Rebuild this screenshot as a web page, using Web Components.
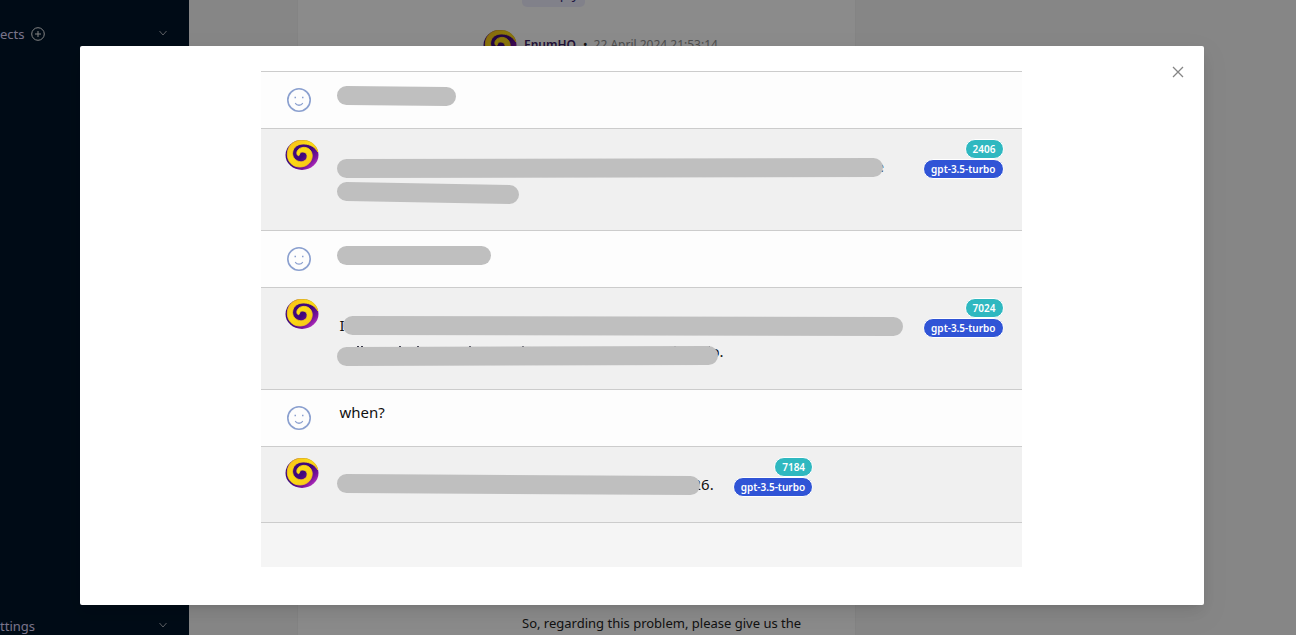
<!DOCTYPE html>
<html lang="en">
<head>
<meta charset="utf-8">
<title>Conversation</title>
<style>
  html, body { margin: 0; height: 100%; overflow: hidden; }
  body { font: 14px/22px "Noto Sans", sans-serif; color: #222; background: #f5f5f5; }
</style>
</head>
<body>
<app-shell>
  <nav-row slot="top" addable>ects</nav-row>
  <nav-row slot="bottom">ttings</nav-row>
  <ticket-feed></ticket-feed>
</app-shell>
<modal-dialog>
  <chat-log>
    <chat-message from="user"><text-line><redact-bar length="119" start="14" end="15"></redact-bar></text-line></chat-message>
    <chat-message from="bot" wide tokens="2406" model="gpt-3.5-turbo">
      <text-line><redact-bar length="546" start="15" end="14"></redact-bar><span slot="tail">e</span></text-line>
      <text-line><redact-bar length="182" start="12" end="15"></redact-bar></text-line>
    </chat-message>
    <chat-message from="user"><text-line><redact-bar length="154" start="15" end="15"></redact-bar></text-line></chat-message>
    <chat-message from="bot" wide tokens="7024" model="gpt-3.5-turbo">
      <text-line inset><span slot="head">I</span><redact-bar length="560" start="13" end="14"></redact-bar></text-line>
      <text-line><redact-bar length="381" start="18" end="17" marks="20 24 62 80 132 185 337 371"></redact-bar><span slot="tail">o.</span></text-line>
    </chat-message>
    <chat-message from="user"><text-line inset>when?</text-line></chat-message>
    <chat-message from="bot" tokens="7184" model="gpt-3.5-turbo">
      <text-line><redact-bar length="363" start="12" end="14"></redact-bar><span slot="tail">26.</span></text-line>
    </chat-message>
  </chat-log>
</modal-dialog>

<script>
const define = (name, html, setup) => {
  const template = document.createElement('template');
  template.innerHTML = html;
  customElements.define(name, class extends HTMLElement {
    constructor() {
      super();
      this.attachShadow({ mode: 'open' }).append(template.content.cloneNode(true));
    }
    connectedCallback() { if (setup) setup(this, this.shadowRoot); }
  });
};

define('swirl-logo', `
  <style>:host { display: block; width: 34px; height: 30px; } svg { display: block; }</style>
  <svg width="34" height="30" viewBox="0 0 34 30" aria-hidden="true">
    <defs>
      <linearGradient id="p" x1=".4" y1=".3" x2="1" y2=".9"><stop offset=".3" stop-color="#40087c"/><stop offset=".65" stop-color="#7a149c"/><stop offset="1" stop-color="#d83fd0"/></linearGradient>
      <linearGradient id="y" x1="0" y1="0" x2="1" y2="1"><stop offset="0" stop-color="#f9b51c"/><stop offset=".4" stop-color="#fbdc12"/><stop offset="1" stop-color="#f8c21a"/></linearGradient>
    </defs>
    <ellipse cx="17" cy="15" rx="16.500" ry="15" fill="url(#p)"/>
    <path d="M32.800 12C31.500 4 24 -.2 16 .2C8 .6 2.500 6 2.300 14C2.200 22 8 27.300 15.500 27C23 26.600 27.600 21 27.200 15C26.800 9.800 22.500 7 18 7.400C13.800 7.800 11.200 11 12 14.200C12.400 15.600 13.500 16 14.200 15.300C14.600 13 16 11.800 18 12C21 12.200 22.500 14.500 22 17.200C21.300 20.800 17.500 22.600 13.800 21.400C9.300 20 7 16 7.700 12C8.600 6.500 13.500 3.800 19 4C25.500 4.200 30.500 7.500 32.800 12Z" fill="url(#y)" stroke="url(#y)" stroke-width=".8"/>
  </svg>`);

define('smile-icon', `
  <style>:host { display: block; width: 24px; height: 24px; } svg { display: block; }</style>
  <svg width="24" height="24" viewBox="0 0 24 24" fill="none" stroke="#8ba0cf" aria-hidden="true">
    <circle cx="12" cy="12" r="11.200" stroke-width="1.600"/>
    <path d="M8.500 15.500C10 17.800 14 17.800 15.500 15.500" stroke-width="1.300" stroke-linecap="round"/>
    <path d="M7.500 9.500h1.500M15 9.500h1.500" stroke-width="1.500"/>
  </svg>`);

define('nav-row', `
  <style>
    :host { display: flex; align-items: center; height: 24px; padding: 0 20px 0 0; color: #dcd2f8; font-size: 13px; }
    a { color: inherit; text-decoration: none; }
    button { display: flex; border: 0; padding: 0; background: none; color: #eee; }
    .add { margin-left: 6px; }
    :host(:not([addable])) .add { display: none; }
    .fold { margin-left: auto; color: #a8acb4; }
    svg { display: block; fill: none; stroke: currentColor; }
  </style>
  <a href="#"><slot></slot></a>
  <button class="add" aria-label="Add"><svg width="14" height="14"><circle cx="7" cy="7" r="6.300"/><path d="M7 4v6M4 7h6"/></svg></button>
  <button class="fold" aria-label="Expand"><svg width="12" height="12"><path d="M2.500 3L6 7L9.500 3"/></svg></button>`);

define('app-shell', `
  <style>
    :host { display: grid; grid-template-columns: 189px 1fr; height: 100vh; }
    nav { display: flex; flex-direction: column; justify-content: space-between; overflow: hidden; box-sizing: border-box; padding: 22px 0 0; background: #001529; }
    .end { margin-bottom: -3px; }
    main { display: flex; min-width: 0; padding: 0 108px; }
  </style>
  <nav aria-label="Main"><slot name="top"></slot><div class="end"><slot name="bottom"></slot></div></nav>
  <main><slot></slot></main>`);

define('ticket-feed', `
  <style>
    :host { display: flex; flex-direction: column; box-sizing: border-box; width: 559px; padding: 0 24px 0 185px; border: solid #f0f0f0; border-width: 0 1px; background: #fdfdfd; overflow: hidden; }
    button { align-self: flex-start; margin: -21px 0 0 39px; width: 63px; height: 28px; padding: 0 6px 0 0; border: 0; border-radius: 5px; text-align: right; font: inherit; line-height: 28px; color: #40307c; background: #ecebfb; }
    header { display: flex; align-items: center; margin-top: 22px; height: 31px; font-size: 12px; color: #8c8c8c; }
    b { margin: 0 7px; color: #3d2266; font-weight: 600; }
    i { font-style: normal; color: #222; margin-right: 6px; }
    p { margin: auto 0 0 39px; font-size: 13px; line-height: 24px; }
  </style>
  <button>Reply</button>
  <header><swirl-logo></swirl-logo><b>EnumHQ</b><i>•</i><time>22 April 2024 21:53:14</time></header>
  <p>So, regarding this problem, please give us the</p>`);

define('modal-dialog', `
  <style>
    :host { position: fixed; inset: 0; display: flex; padding: 46px 92px 30px 80px; background: rgba(0,0,0,.45); }
    section { position: relative; flex: 1; box-sizing: border-box; padding: 25px 26px 38px 24px; border-radius: 2px; background: #fff; box-shadow: 0 3px 6px -4px rgba(0,0,0,.12), 0 6px 16px rgba(0,0,0,.08), 0 9px 28px 8px rgba(0,0,0,.05); }
    button { position: absolute; top: 14px; right: 14px; padding: 6px; border: 0; background: none; color: #858585; }
    svg { display: block; stroke: currentColor; stroke-width: 1.300; }
  </style>
  <section role="dialog" aria-label="Conversation">
    <button aria-label="Close"><svg width="12" height="12"><path d="M1 1L11 11M11 1L1 11"/></svg></button>
    <slot></slot>
  </section>`);

define('chat-log', `
  <style>:host { display: block; box-sizing: border-box; max-width: 761px; height: 100%; margin: 0 auto; background: #f5f5f5; } footer { border-top: 1px solid #ccc; }</style>
  <slot></slot><footer></footer>`);

define('chat-message', `
  <style>
    :host { display: flex; align-items: flex-start; box-sizing: border-box; border-top: 1px solid #ccc; padding: 11px 18px 0 24px; }
    :host([from=user]) { padding-top: 10px; padding-bottom: 20px; background: #fdfdfd; }
    :host([from=bot]) { padding-bottom: 10px; background: #f0f0f0; }
    .who { flex: none; width: 52px; }
    smile-icon { margin: 6px 0 -4px 2px; }
    .text { min-width: 0; }
    :host([from=bot]) .text { padding: 14px 0; }
    :host([wide]) .text { flex: 1; }
    .meta { display: flex; flex-direction: column; align-items: flex-end; margin: -1px 0 0 19px; }
    .meta span { box-sizing: border-box; height: 20px; padding: 0 7px; border: 1px solid #fff; border-radius: 10px; font-size: 10px; line-height: 18px; font-weight: 600; color: #fff; background: #3054d6; }
    .meta .tokens { background: #2fb8c0; }
  </style>
  <div class="who"></div>
  <div class="text"><slot></slot></div>`,
  (host, root) => {
    const bot = host.getAttribute('from') === 'bot';
    root.querySelector('.who').append(document.createElement(bot ? 'swirl-logo' : 'smile-icon'));
    if (!bot) return;
    const meta = document.createElement('div');
    meta.className = 'meta';
    for (const key of ['tokens', 'model']) {
      const tag = document.createElement('span');
      tag.className = key;
      tag.textContent = host.getAttribute(key);
      meta.append(tag);
    }
    root.append(meta);
  });

define('text-line', `
  <style>
    :host { display: flex; height: 26px; font-size: 15px; line-height: 24px; color: #111; }
    :host([inset]) { padding-left: 3px; }
    ::slotted(span[slot=head]) { width: 3px; }
    ::slotted(span[slot=tail]) { margin-left: -7px; }
    ::slotted(redact-bar) { position: relative; z-index: 1; }
  </style><slot name="head"></slot><slot></slot><slot name="tail"></slot>`);

define('redact-bar', `
  <style>:host { display: block; flex: none; } svg { display: block; overflow: visible; }</style>
  <svg height="26" aria-hidden="true"></svg>`,
  (host, root) => {
    const n = key => Number(host.getAttribute(key));
    const svg = root.querySelector('svg');
    const marks = (host.getAttribute('marks') || '').split(' ').filter(Boolean);
    svg.setAttribute('width', n('length'));
    svg.innerHTML = marks.map(x => `<path d="M${x} 7.500h2" stroke="#334"/>`).join('') +
      `<path d="M9.500 ${n('start') - .5}L${n('length') - 9.5} ${n('end') - .5}" stroke="#bfbfbf" stroke-width="19" stroke-linecap="round"/>`;
  });
</script>
</body>
</html>
